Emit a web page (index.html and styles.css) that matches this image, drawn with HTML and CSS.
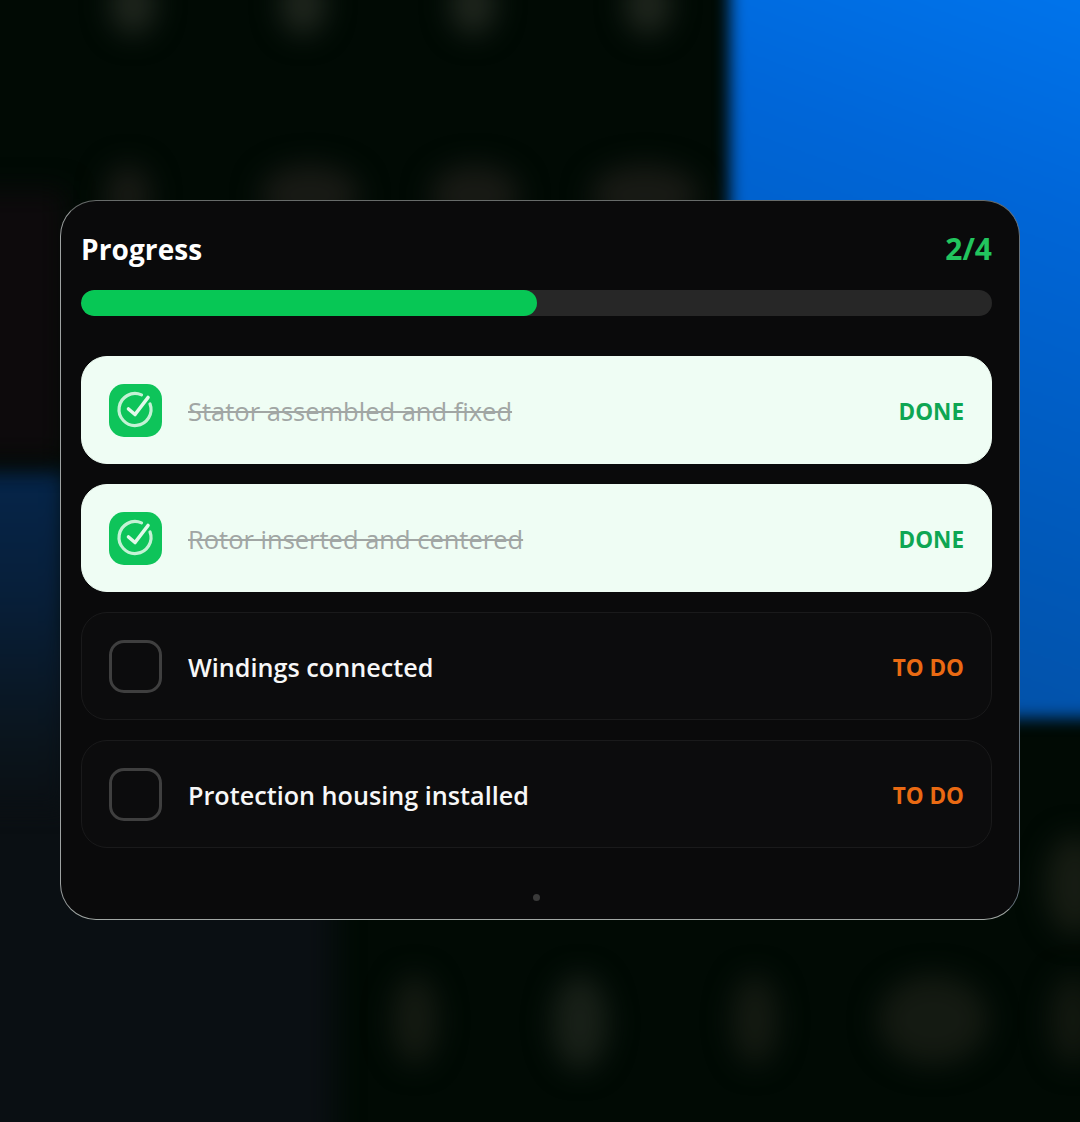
FILE: index.html
```html
<!DOCTYPE html>
<html lang="en">
<head>
<meta charset="utf-8">
<title>Progress</title>
<link rel="stylesheet" href="styles.css">
</head>
<body>
<div class="backdrop" aria-hidden="true">
  <div class="blob blue"></div>
  <div class="blob slate"></div>
  <div class="blob navy"></div>
  <div class="blob maroon"></div>
  <div class="blob spot s1"></div><div class="blob spot s2"></div><div class="blob spot s3"></div><div class="blob spot s4"></div>
  <div class="blob spot s5"></div><div class="blob spot s6"></div><div class="blob spot s7"></div><div class="blob spot s8"></div>
  <div class="blob spot s9"></div><div class="blob spot s10"></div><div class="blob spot s11"></div><div class="blob spot s12"></div><div class="blob spot s13"></div>
  <div class="blob spot s14"></div>
</div>
<main class="card">
  <header class="head">
    <h1 class="title">Progress</h1>
    <span class="count">2/4</span>
  </header>
  <div class="track"><div class="fill" style="width:50%"></div></div>
  <ul class="list">
    <li class="row done">
      <span class="box"><svg viewBox="0 0 53 53" width="53" height="53"><path d="M32.5 10.9A16 16 0 1 0 41 19.9" fill="none" stroke="#c4f2d5" stroke-width="3.2" stroke-linecap="round"/><path d="M19.5 25l6.5 5.5L39 13.5" fill="none" stroke="#e2f9ea" stroke-width="3.6" stroke-linecap="round" stroke-linejoin="round"/></svg></span>
      <span class="label">Stator assembled and fixed</span>
      <span class="status">DONE</span>
    </li>
    <li class="row done">
      <span class="box"><svg viewBox="0 0 53 53" width="53" height="53"><path d="M32.5 10.9A16 16 0 1 0 41 19.9" fill="none" stroke="#c4f2d5" stroke-width="3.2" stroke-linecap="round"/><path d="M19.5 25l6.5 5.5L39 13.5" fill="none" stroke="#e2f9ea" stroke-width="3.6" stroke-linecap="round" stroke-linejoin="round"/></svg></span>
      <span class="label">Rotor inserted and centered</span>
      <span class="status">DONE</span>
    </li>
    <li class="row todo">
      <span class="box"></span>
      <span class="label">Windings connected</span>
      <span class="status">TO DO</span>
    </li>
    <li class="row todo">
      <span class="box"></span>
      <span class="label">Protection housing installed</span>
      <span class="status">TO DO</span>
    </li>
  </ul>
  <div class="pager"><span class="dot"></span></div>
</main>
</body>
</html>
```
FILE: styles.css
```css
* { box-sizing: border-box; }
html, body { margin: 0; height: 1122px; }
body {
  position: relative;
  overflow: hidden;
  background: #010a04;
  padding: 200px 60px 0;
  font-family: "Open Sans", "Noto Sans", sans-serif;
}
.backdrop { position: absolute; inset: 0; overflow: hidden; }
.blob { position: absolute; filter: blur(9px); }
.blue {
  left: 730px; top: -40px; width: 400px; height: 758px;
  background: linear-gradient(200deg, #0077f0 0%, #0066d8 30%, #0058b8 70%, #044ea0 100%);
  filter: blur(8px);
}
.navy {
  left: -40px; top: 470px; width: 105px; height: 340px;
  background: linear-gradient(180deg, #05254a 0%, #071f3a 35%, #0a141c 80%, #0a0f13 100%);
  filter: blur(10px);
}
.slate { left: -60px; top: 640px; width: 395px; height: 560px; background: #0a0f13; filter: blur(14px); }
.maroon { left: -40px; top: 190px; width: 105px; height: 270px; background: #0d0a0c; filter: blur(14px); }
.spot { width: 46px; height: 60px; border-radius: 50%; background: #1f261e; filter: blur(14px); }
.s1 { left: 110px; top: -25px; } .s2 { left: 280px; top: -25px; } .s3 { left: 450px; top: -25px; } .s4 { left: 625px; top: -25px; }
.s5 { left: 105px; top: 165px; background: #181a15; } .s6 { left: 260px; top: 165px; width: 100px; background: #181a15; } .s7 { left: 430px; top: 165px; width: 90px; background: #181a15; } .s8 { left: 590px; top: 165px; width: 110px; background: #181a15; }
.s9 { left: 392px; top: 975px; height: 90px; background: #141a12; } .s10 { left: 552px; top: 975px; width: 56px; height: 95px; background: #182018; } .s11 { left: 732px; top: 975px; height: 90px; background: #141a12; }
.s12 { left: 878px; top: 975px; width: 110px; height: 90px; background: #141a12; } .s13 { left: 1050px; top: 975px; height: 90px; background: #121810; }
.s14 { left: 1045px; top: 835px; width: 60px; height: 100px; background: #161c13; }

.card {
  position: relative;
  width: 960px;
  height: 720px;
  padding: 27px 27px 0 20px;
  background: #0a0a0b;
  border: 1px solid;
  border-color: #676b6a #66727c #a2a8a5 #9ea2a2;
  border-radius: 36px;
  display: flex;
  flex-direction: column;
}
.head { display: flex; justify-content: space-between; align-items: center; height: 42px; }
.title { margin: 0; color: #fff; font-size: 28px; font-weight: 700; line-height: 42px; letter-spacing: 0.1px; }
.count { color: #22c55e; font-size: 30px; font-weight: 700; line-height: 42px; }
.track { margin-top: 20px; height: 26px; border-radius: 13px; background: #272727; overflow: hidden; }
.fill { height: 100%; border-radius: 13px; background: #07c755; }
.list { list-style: none; margin: 40px 0 0; padding: 0; display: flex; flex-direction: column; gap: 20px; }
.row {
  height: 108px;
  display: flex;
  align-items: center;
  gap: 26px;
  padding: 0 27px;
  border-radius: 26px;
  border: 1px solid #1a1a1b;
}
.box { flex: none; width: 53px; height: 53px; border-radius: 15px; display: block; }
.label { flex: 1; font-size: 25.5px; font-weight: 500; line-height: 34px; padding-top: 2px; }
.status { font-size: 22.5px; font-weight: 700; line-height: 30px; padding-top: 4px; }
.done { background: #effdf4; border-color: #effdf4; }
.done .box { background: #0ec45a; }
.done .box svg { display: block; }
.done .label { color: #a1a6a4; text-decoration: line-through; }
.done .status { color: #0ea653; }
.todo { background: #0c0c0d; }
.todo .box { border: 3px solid #3f3f3f; }
.todo .label { color: #f7f7f7; font-size: 25.2px; font-weight: 600; }
.todo .status { color: #ea6a13; }
.pager { display: flex; justify-content: center; margin-top: 46px; }
.dot { width: 7px; height: 7px; border-radius: 50%; background: #3a3a3a; }
```
